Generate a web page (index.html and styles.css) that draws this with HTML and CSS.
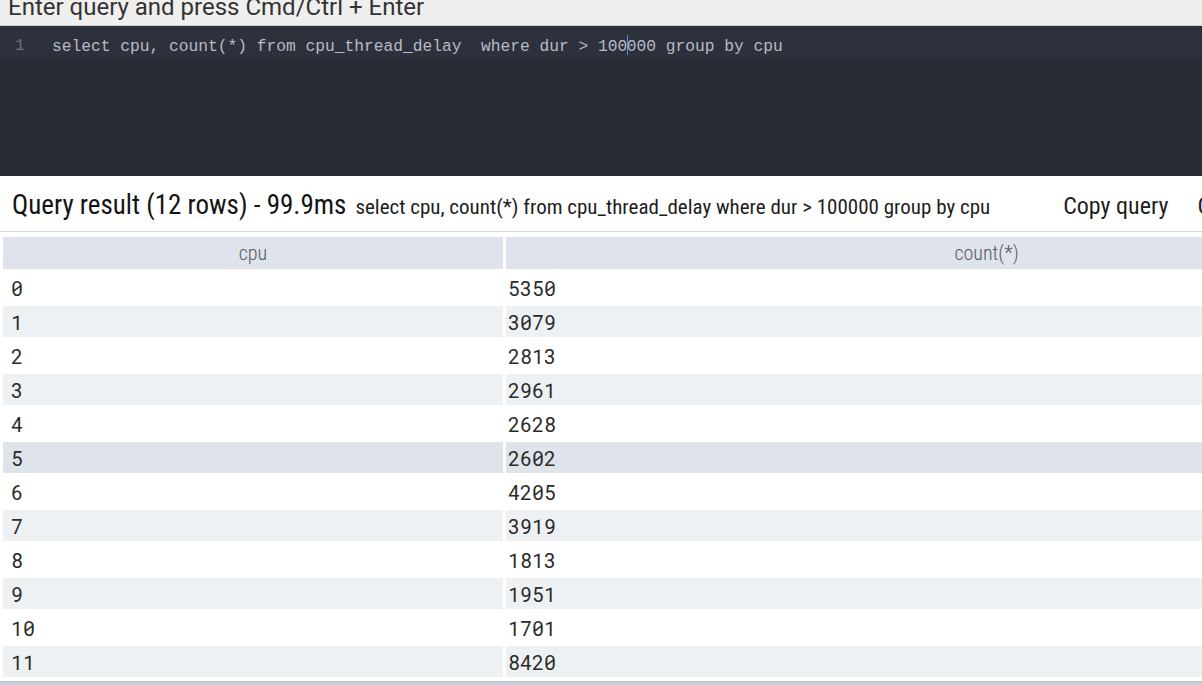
FILE: index.html
```html
<!DOCTYPE html>
<html>
<head>
<meta charset="utf-8">
<link rel="stylesheet" href="styles.css">
</head>
<body>
<div class="page">
  <div class="topbar"><div class="topbar-text">Enter query and press Cmd/Ctrl + Enter</div></div>
  <div class="editor">
    <div class="line active">
      <span class="gutter">1</span>
      <span class="code">select cpu, count(*) from cpu_thread_delay  where dur &gt; 100<span class="cursor"></span>000 group by cpu</span>
    </div>
  </div>
  <div class="result-header">
    <span class="title">Query result (12 rows) - 99.9ms</span>
    <span class="query">select cpu, count(*) from cpu_thread_delay where dur &gt; 100000 group by cpu</span>
    <div class="actions">
      <span class="btn">Copy query</span>
      <span class="btn">Close</span>
    </div>
  </div>
  <div class="table-wrap">
    <table class="result">
      <thead>
        <tr><th class="c1">cpu</th><th class="c2">count(*)</th></tr>
      </thead>
      <tbody>
        <tr><td class="c1">0</td><td class="c2">5350</td></tr>
        <tr><td class="c1">1</td><td class="c2">3079</td></tr>
        <tr><td class="c1">2</td><td class="c2">2813</td></tr>
        <tr><td class="c1">3</td><td class="c2">2961</td></tr>
        <tr><td class="c1">4</td><td class="c2">2628</td></tr>
        <tr class="hover"><td class="c1">5</td><td class="c2">2602</td></tr>
        <tr><td class="c1">6</td><td class="c2">4205</td></tr>
        <tr><td class="c1">7</td><td class="c2">3919</td></tr>
        <tr><td class="c1">8</td><td class="c2">1813</td></tr>
        <tr><td class="c1">9</td><td class="c2">1951</td></tr>
        <tr><td class="c1">10</td><td class="c2">1701</td></tr>
        <tr><td class="c1">11</td><td class="c2">8420</td></tr>
      </tbody>
    </table>
  </div>
  <div class="scrollbar"></div>
</div>
</body>
</html>
```

FILE: styles.css
```css
html, body {
  margin: 0;
  padding: 0;
  background: #ffffff;
  overflow: hidden;
}
.page {
  width: 1202px;
  height: 685px;
  overflow: hidden;
  display: flex;
  flex-direction: column;
  font-family: "Roboto", "Liberation Sans", sans-serif;
}
.topbar {
  height: 25px;
  flex: none;
  background: #efefef;
  border-bottom: 1px solid #cfcfcf;
  overflow: hidden;
}
.topbar-text {
  margin-top: -5px;
  padding-left: 8px;
  font-size: 24px;
  line-height: 24px;
  color: #333333;
  white-space: nowrap;
}
.editor {
  height: 150px;
  flex: none;
  background: #272b34;
}
.line {
  height: 33px;
  box-sizing: border-box;
  padding-top: 5px;
  display: flex;
  align-items: center;
  font-family: "Liberation Mono", monospace;
  font-size: 16.25px;
  white-space: pre;
}
.line.active {
  background: #2c313b;
}
.gutter {
  width: 52px;
  flex: none;
  box-sizing: border-box;
  padding-left: 15px;
  color: #6b7079;
}
.code {
  color: #b7bcc4;
}
.cursor {
  display: inline-block;
  width: 0;
  height: 20px;
  border-left: 1.5px solid #528bff;
  vertical-align: -4px;
  margin-right: -1.5px;
}
.result-header {
  height: 56px;
  flex: none;
  box-sizing: border-box;
  border-bottom: 1px solid #d6d6d6;
  display: flex;
  align-items: baseline;
  padding-top: 13px;
  padding-left: 12px;
  white-space: nowrap;
  font-family: "Roboto Condensed", "Liberation Sans Narrow", "Roboto", sans-serif;
  font-stretch: condensed;
}
.title {
  font-size: 27px;
  color: #141414;
}
.query {
  margin-left: 9px;
  font-size: 21px;
  color: #1e1e1e;
}
.actions {
  display: flex;
  gap: 29px;
  margin-left: 73px;
}
.btn {
  font-size: 24px;
  color: #1e1e1e;
}
.table-wrap {
  flex: none;
  height: 447px;
  overflow: hidden;
  margin-top: 2px;
}
.result {
  border-spacing: 3px;
  border-collapse: separate;
  table-layout: fixed;
  width: 1470px;
}
.result th {
  height: 32px;
  padding: 0;
  background: #dfe3eb;
  font-family: "Roboto Condensed", "Liberation Sans Narrow", "Roboto", sans-serif;
  font-stretch: condensed;
  font-weight: 300;
  font-size: 20px;
  color: #555a60;
  text-align: center;
}
.result th.c1 {
  width: 500px;
}
.result td {
  height: 31px;
  padding: 0;
  font-family: "Roboto Mono", "DejaVu Sans Mono", monospace;
  font-size: 20px;
  color: #2a2a2a;
}
.result td.c1 {
  padding-left: 8px;
}
.result td.c2 {
  padding-left: 2px;
}
.result tbody tr:nth-child(even) td {
  background: #eef1f4;
}
.result tbody tr.hover td {
  background: #dfe3ea;
}
.scrollbar {
  flex: none;
  height: 4px;
  background: #c6cfdb;
  border-top: 1px solid #b9c3d0;
}
```
